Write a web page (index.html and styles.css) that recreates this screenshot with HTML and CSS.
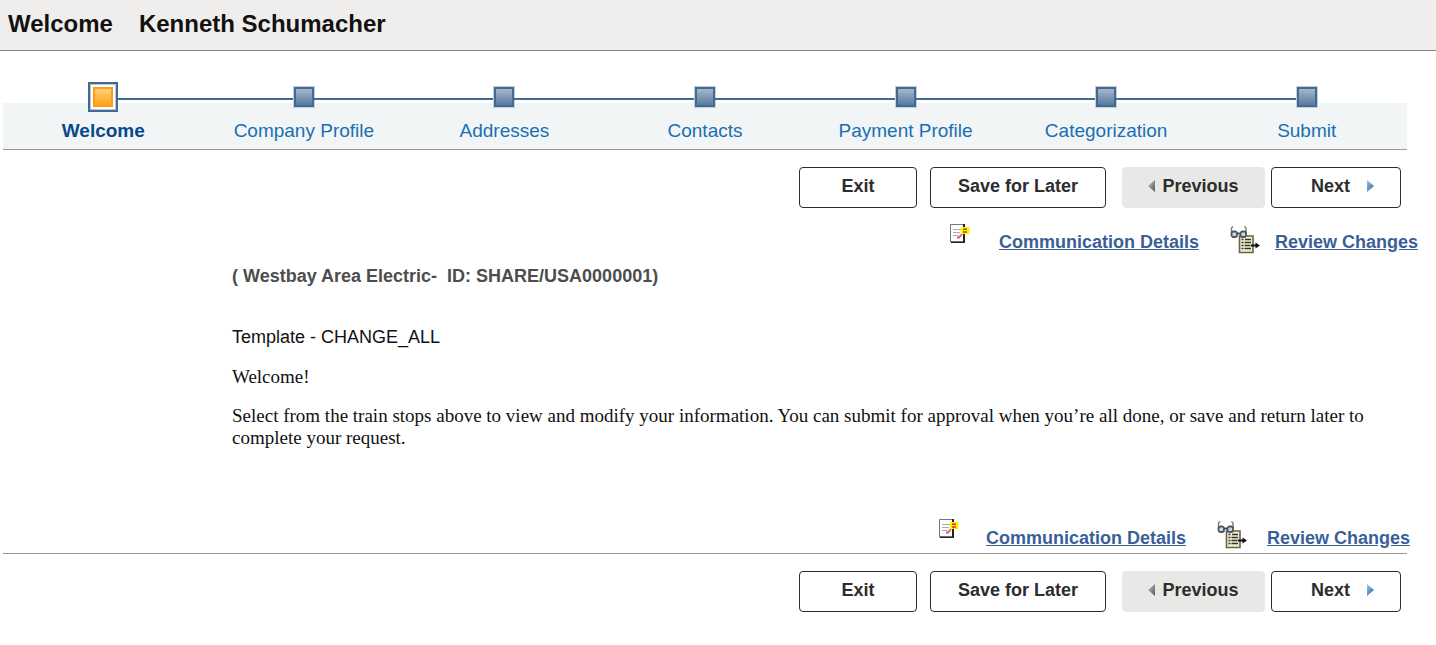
FILE: index.html
```html
<!DOCTYPE html>
<html lang="en">
<head>
    <meta charset="UTF-8">
    <meta name="viewport" content="width=device-width, initial-scale=1.0">
    <title>Supplier Change Request</title>
    <link rel="stylesheet" href="styles.css">
</head>
<body>
    <!-- Shared icons -->
    <svg class="sprite" width="0" height="0" aria-hidden="true">
        <defs>
            <linearGradient id="gray_fill" x1="0" y1="0" x2="1" y2="1">
                <stop offset="0" stop-color="#c5c5c5"/>
                <stop offset="1" stop-color="#555"/>
            </linearGradient>
            <linearGradient id="blue_fill" x1="0" y1="0" x2="1" y2="1">
                <stop offset="0" stop-color="#9cc6e6"/>
                <stop offset="1" stop-color="#2c5f9e"/>
            </linearGradient>
        </defs>
        <symbol id="icon_note" viewBox="0 0 20 19">
            <path d="M0.5 0.5h13v17.500h-13z" fill="#fdfdfd" stroke="#777"/>
            <path d="M13 0h2v19h-2zM1 17.500h13v1.500h-13z" fill="#222"/>
            <path d="M3 5.500h8M3 8.500h7M3 11.500h5" stroke="#aaa" stroke-width="1.2"/>
            <path d="M7 13.500h2l3-3.500" fill="none" stroke="#d0605a" stroke-width="1.8"/>
            <path d="M11 3h8.500v7h-8.500z" fill="#fff200"/>
            <path d="M13 5.200h4M13 8h4" stroke="#c4401c" stroke-width="1.5"/>
        </symbol>
        <symbol id="icon_review" viewBox="0 0 30 28">
            <path d="M9.500 10h13.500v16.500h-13.500z" fill="#f3efcf" stroke="#66644f" stroke-width="1.6"/>
            <path d="M11.500 13.500h2M15 13.500h6M11.500 16.500h2M14.500 16.500h6.500M11.500 19.500h2M14.500 19.500h6M11.500 22.500h2M14.500 22.500h6.500" stroke="#333" stroke-width="1.5"/>
            <path d="M21 19.500h5" stroke="#111" stroke-width="2"/>
            <path d="M25.500 16.500l4.500 3-4.500 3z" fill="#111"/>
            <path d="M3 0.500L1.500 2v5M14.500 0.500l1.500 1.500v5" fill="none" stroke="#777" stroke-width="1.4"/>
            <rect x="1.500" y="5.500" width="5.500" height="5.500" rx="2" fill="#bcdcf5" stroke="#555" stroke-width="1.800"/>
            <rect x="10.500" y="5.500" width="5.500" height="5.500" rx="2" fill="#bcdcf5" stroke="#555" stroke-width="1.800"/>
            <path d="M7 7.500h3.500" stroke="#444" stroke-width="1.800"/>
        </symbol>
        <symbol id="icon_prev" viewBox="0 0 7 12">
            <path d="M7 0v12L0 6z" fill="url(#gray_fill)"/>
        </symbol>
        <symbol id="icon_next" viewBox="0 0 7 12">
            <path d="M0 0v12l7-6z" fill="url(#blue_fill)"/>
        </symbol>
    </svg>

    <header class="page-header">
        <h1>Welcome</h1>
        <h1>Kenneth Schumacher</h1>
    </header>

    <nav aria-label="Progress">
        <ol class="train">
            <li class="current">
                <div class="track"><span class="line"></span><span class="stop"></span><span class="line"></span></div>
                <a href="#" aria-current="step">Welcome</a>
            </li>
            <li>
                <div class="track"><span class="line"></span><span class="stop"></span><span class="line"></span></div>
                <a href="#">Company Profile</a>
            </li>
            <li>
                <div class="track"><span class="line"></span><span class="stop"></span><span class="line"></span></div>
                <a href="#">Addresses</a>
            </li>
            <li>
                <div class="track"><span class="line"></span><span class="stop"></span><span class="line"></span></div>
                <a href="#">Contacts</a>
            </li>
            <li>
                <div class="track"><span class="line"></span><span class="stop"></span><span class="line"></span></div>
                <a href="#">Payment Profile</a>
            </li>
            <li>
                <div class="track"><span class="line"></span><span class="stop"></span><span class="line"></span></div>
                <a href="#">Categorization</a>
            </li>
            <li>
                <div class="track"><span class="line"></span><span class="stop"></span><span class="line"></span></div>
                <a href="#">Submit</a>
            </li>
        </ol>
    </nav>

    <div class="actions">
        <button type="button" class="exit">Exit</button>
        <button type="button" class="save">Save for Later</button>
        <div class="pager">
            <button type="button" class="previous" disabled><svg width="7" height="12"><use href="#icon_prev"/></svg>Previous</button>
            <button type="button" class="next">Next<svg width="7" height="12"><use href="#icon_next"/></svg></button>
        </div>
    </div>

    <div class="links">
        <svg class="note" width="20" height="19"><use href="#icon_note"/></svg>
        <a href="#">Communication Details</a>
        <svg class="review" width="30" height="28"><use href="#icon_review"/></svg>
        <a href="#">Review Changes</a>
    </div>

    <main class="content">
        <h2>( Westbay Area Electric-&nbsp; ID: SHARE/USA0000001)</h2>
        <p class="template">Template - CHANGE_ALL</p>
        <p>Welcome!</p>
        <p>Select from the train stops above to view and modify your information. You can submit for approval when you’re all done, or save and return later to complete your request.</p>
    </main>

    <footer>
        <div class="links links-bottom">
            <svg class="note" width="20" height="19"><use href="#icon_note"/></svg>
            <a href="#">Communication Details</a>
            <svg class="review" width="30" height="28"><use href="#icon_review"/></svg>
            <a href="#">Review Changes</a>
        </div>
        <hr>
        <div class="actions">
            <button type="button" class="exit">Exit</button>
            <button type="button" class="save">Save for Later</button>
            <div class="pager">
                <button type="button" class="previous" disabled><svg width="7" height="12"><use href="#icon_prev"/></svg>Previous</button>
                <button type="button" class="next">Next<svg width="7" height="12"><use href="#icon_next"/></svg></button>
            </div>
        </div>
    </footer>
</body>
</html>
```

FILE: styles.css
```css
body {
    font-family: "Liberation Sans", Arial, sans-serif;
    font-size: 18px;
    background-color: #fff;
    color: #111;
    margin: 0;
}

.sprite {
    display: block;
}

.page-header {
    display: flex;
    gap: 26px;
    padding: 10px 8px 12px;
    background-color: #f0eeec;
    border-bottom: 1px solid #8a827a;
}

.page-header h1 {
    margin: 0;
    font-size: 24px;
    line-height: 28px;
}

/* Train of steps */
.train {
    display: grid;
    grid-template-columns: repeat(7, 1fr);
    list-style: none;
    margin: 31px 29px 0 3px;
    padding: 0;
    background: linear-gradient(transparent 21px, #f1f5f5 21px);
    border-bottom: 1px solid #959ca1;
}

.train li {
    text-align: center;
    padding-bottom: 7px;
}

.track {
    display: flex;
    align-items: center;
    height: 30px;
}

.line {
    flex: 1;
    height: 2px;
    margin-top: 4px;
    background-color: #446a94;
}

.train li:first-child .line:first-child,
.train li:last-child .line:last-child {
    visibility: hidden;
}

.stop {
    box-sizing: border-box;
    width: 20px;
    height: 20px;
    border: 2px solid #446a94;
    background: linear-gradient(#a5b6cb, #587ba0);
    box-shadow: 0 0 0 1px #c3cfda;
}

.current .stop {
    width: 30px;
    height: 30px;
    padding: 3px;
    background: linear-gradient(#ffd489, #ff9c10) content-box, #fff;
    box-shadow: inset 0 0 0 1px #b9c7d6;
}

.current .stop::before {
    content: "";
    display: block;
    box-sizing: border-box;
    height: 20px;
    border: 2px solid #ff9c10;
}

.train a {
    display: block;
    font-size: 19px;
    line-height: 22px;
    margin-top: 8px;
    color: #1a6fb3;
    text-decoration: none;
}

.train .current a {
    color: #08498c;
    font-weight: bold;
}

/* Buttons */
.actions {
    display: flex;
    justify-content: flex-end;
    padding: 17px 35px 0 0;
}

button {
    display: flex;
    align-items: center;
    justify-content: center;
    height: 41px;
    padding: 0 0 3px;
    font-family: inherit;
    font-size: 18px;
    font-weight: bold;
    color: #2d2d2d;
    background-color: #fff;
    border: 1px solid #2d2d2d;
    border-radius: 4px;
    cursor: pointer;
}

.exit {
    width: 118px;
    margin-right: 13px;
}

.save {
    width: 176px;
    margin-right: 16px;
}

.pager {
    display: flex;
    gap: 6px;
}

.previous {
    width: 143px;
    gap: 7px;
    background-color: #e8e8e6;
    border-color: #e8e8e6;
    cursor: default;
}

.next {
    width: 130px;
    gap: 17px;
    padding-left: 13px;
}

/* Communication and review links */
.links {
    display: flex;
    justify-content: flex-end;
    align-items: flex-start;
    padding: 16px 18px 0 0;
}

.links a {
    line-height: 20px;
    margin-top: 8px;
    font-weight: bold;
    color: #3a5f98;
}

.note {
    margin-right: 29px;
}

.review {
    margin: 2px 15px 0 31px;
}

.links-bottom {
    padding: 0 26px 0 0;
}

.links-bottom a {
    margin-top: 9px;
}

.links-bottom .note {
    margin-right: 27px;
}

.links-bottom .review {
    margin-right: 20px;
}

.content {
    padding: 11px 30px 0 232px;
}

.content h2 {
    margin: 0;
    font-size: 18px;
    line-height: 22px;
    color: #4d4d4d;
}

.content p {
    font-family: "Liberation Serif", "Times New Roman", serif;
    font-size: 19px;
    line-height: 22px;
    margin: 0 0 17px;
}

.content .template {
    font-family: inherit;
    font-size: 18px;
    margin: 39px 0 18px;
}

footer {
    margin-top: 70px;
}

hr {
    height: 1px;
    margin: 4px 29px 0 3px;
    border: none;
    background-color: #959595;
}
```
